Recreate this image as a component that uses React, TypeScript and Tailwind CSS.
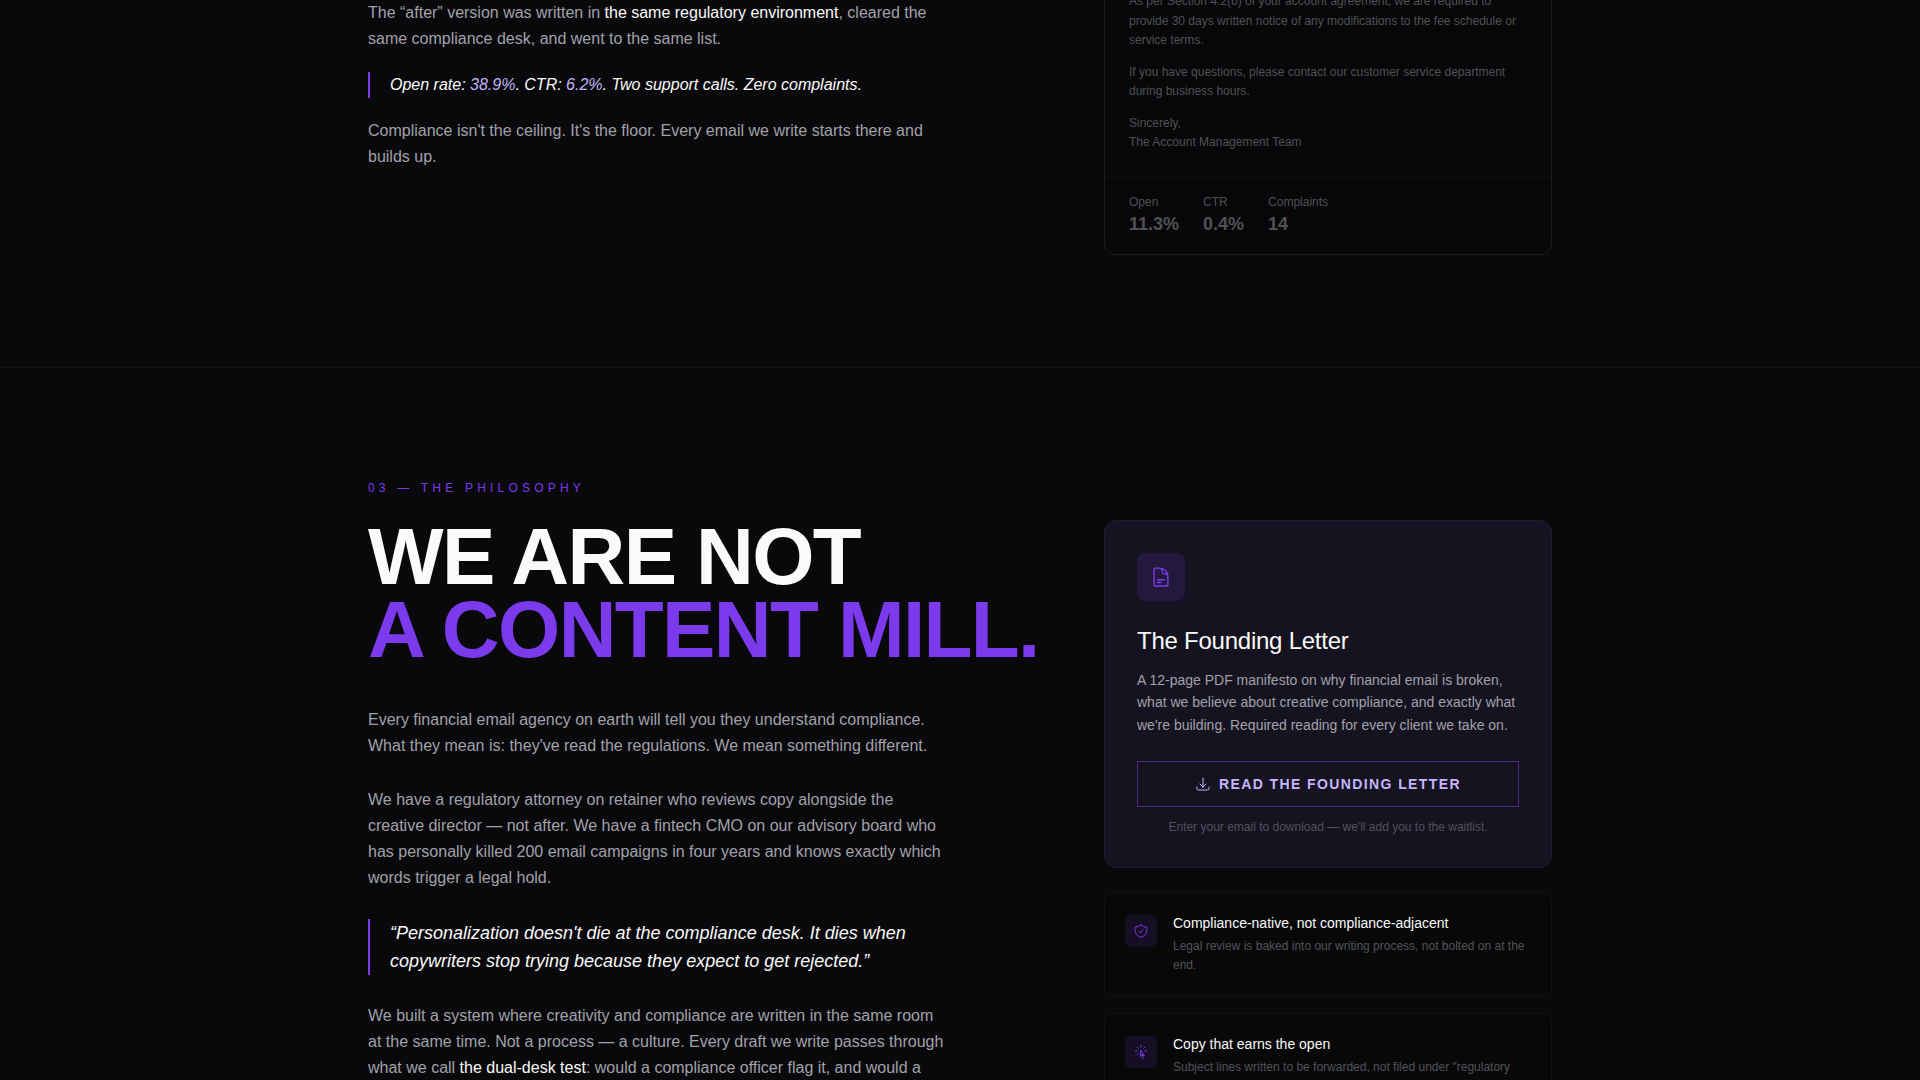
import type { ReactNode } from "react";
import {
  HiOutlineArrowDownTray,
  HiOutlineCursorArrowRays,
  HiOutlineDocumentText,
  HiOutlineShieldCheck,
} from "react-icons/hi2";

const stats = [
  { label: "Open", value: "11.3%" },
  { label: "CTR", value: "0.4%" },
  { label: "Complaints", value: "14" },
];

function Columns({ children }: { children: ReactNode }) {
  return (
    <div className="mx-auto grid max-w-7xl grid-cols-[3fr_2fr] items-start gap-16 px-12">
      {children}
    </div>
  );
}

function Strong({ children }: { children: ReactNode }) {
  return <span className="text-[#fafafa]">{children}</span>;
}

function BeforeEmail() {
  return (
    <article className="rounded-b-xl border border-t-0 border-[#1b1b1e] bg-[#070709] text-xs text-[#515154]">
      <div className="space-y-3 px-6 pb-6 leading-relaxed">
        <p>
          As per Section 4.2(b) of your account agreement, we are required to provide 30 days
          written notice of any modifications to the fee schedule or service terms.
        </p>
        <p>
          If you have questions, please contact our customer service department during business
          hours.
        </p>
        <p>
          Sincerely,
          <br />
          The Account Management Team
        </p>
      </div>
      <dl className="flex gap-6 border-t border-[#101012] px-6 py-4">
        {stats.map((s) => (
          <div key={s.label}>
            <dt>{s.label}</dt>
            <dd className="text-lg font-bold">{s.value}</dd>
          </div>
        ))}
      </dl>
    </article>
  );
}

function LetterCard() {
  return (
    <article className="rounded-xl border border-[#1f1b36] bg-[#151320] p-8">
      <div className="mb-6 flex size-12 items-center justify-center rounded-lg bg-[#23193f] text-[#7c3aed]">
        <HiOutlineDocumentText className="size-[22px]" aria-hidden="true" />
      </div>
      <h3 className="mb-3 text-2xl tracking-[-0.01em] text-[#fafafa]">The Founding Letter</h3>
      <p className="mb-6 text-sm leading-relaxed text-[#a1a1aa]">
        A 12-page PDF manifesto on why financial email is broken, what we believe about creative
        compliance, and exactly what we're building. Required reading for every client we take on.
      </p>
      <button
        type="button"
        className="flex w-full items-center justify-center gap-2 border border-[#4a2a88] px-6 py-3 text-sm font-bold tracking-widest text-[#c4b5fd] uppercase"
      >
        <HiOutlineArrowDownTray className="size-4" aria-hidden="true" />
        Read the Founding Letter
      </button>
      <p className="mt-3 text-center text-xs text-[#52525b]">
        Enter your email to download — we'll add you to the waitlist.
      </p>
    </article>
  );
}

function Feature({
  icon,
  title,
  children,
}: {
  icon: ReactNode;
  title: string;
  children: ReactNode;
}) {
  return (
    <li className="flex min-h-26 items-start gap-4 rounded-lg border border-[#121119] bg-[#080808] p-5">
      <div className="mt-0.5 flex size-8 shrink-0 items-center justify-center rounded-md bg-[#150e24] text-[#7c3aed]">
        {icon}
      </div>
      <div>
        <h4 className="text-sm text-[#fafafa]">{title}</h4>
        <p className="mt-1 text-xs leading-relaxed text-[#52525b]">{children}</p>
      </div>
    </li>
  );
}

export default function App() {
  return (
    <main className="h-screen overflow-hidden bg-[#09090b] font-['Liberation_Sans',Arial,sans-serif] text-base text-[#a1a1aa]">
      <section className="-mt-2 pb-28">
        <Columns>
          <div className="max-w-xl space-y-5 pt-2 leading-relaxed">
            <p>
              The “after” version was written in <Strong>the same regulatory environment</Strong>,
              cleared the same compliance desk, and went to the same list.
            </p>
            <blockquote className="border-l-2 border-[#7c3aed] pl-5 text-[#fafafa] italic">
              Open rate: <span className="text-[#c4b5fd]">38.9%</span>. CTR:{" "}
              <span className="text-[#c4b5fd]">6.2%</span>. Two support calls. Zero complaints.
            </blockquote>
            <p>
              Compliance isn't the ceiling. It's the floor. Every email we write starts there and
              builds up.
            </p>
          </div>
          <BeforeEmail />
        </Columns>
      </section>

      <section className="border-t border-[#111114] py-28">
        <Columns>
          <div>
            <p className="mb-6 text-xs tracking-[0.35em] text-[#7c3aed] uppercase">
              03 — The Philosophy
            </p>
            <h2 className="mb-10 text-[80px] leading-[0.92] font-bold tracking-[-0.02em] whitespace-nowrap text-[#fafafa] uppercase">
              We are not
              <br />
              <span className="text-[#7c3aed]">a content mill.</span>
            </h2>
            <div className="max-w-xl space-y-7 leading-relaxed">
              <p>
                Every financial email agency on earth will tell you they understand compliance. What
                they mean is: they've read the regulations. We mean something different.
              </p>
              <p>
                We have a regulatory attorney on retainer who reviews copy alongside the creative
                director — not after. We have a fintech CMO on our advisory board who has personally
                killed 200 email campaigns in four years and knows exactly which words trigger a
                legal hold.
              </p>
              <blockquote className="border-l-2 border-[#7c3aed] pl-5 text-lg text-[#fafafa] italic">
                “Personalization doesn't die at the compliance desk. It dies when copywriters stop
                trying because they expect to get rejected.”
              </blockquote>
              <p>
                We built a system where creativity and compliance are written in the same room at
                the same time. Not a process — a culture. Every draft we write passes through what
                we call <Strong>the dual-desk test</Strong>: would a compliance officer flag it, and
                would a
              </p>
            </div>
          </div>

          <div className="pt-10">
            <LetterCard />
            <ul className="mt-6 space-y-4">
              <Feature
                icon={<HiOutlineShieldCheck className="size-4" aria-hidden="true" />}
                title="Compliance-native, not compliance-adjacent"
              >
                Legal review is baked into our writing process, not bolted on at the end.
              </Feature>
              <Feature
                icon={<HiOutlineCursorArrowRays className="size-4" aria-hidden="true" />}
                title="Copy that earns the open"
              >
                Subject lines written to be forwarded, not filed under "regulatory
              </Feature>
            </ul>
          </div>
        </Columns>
      </section>
    </main>
  );
}
